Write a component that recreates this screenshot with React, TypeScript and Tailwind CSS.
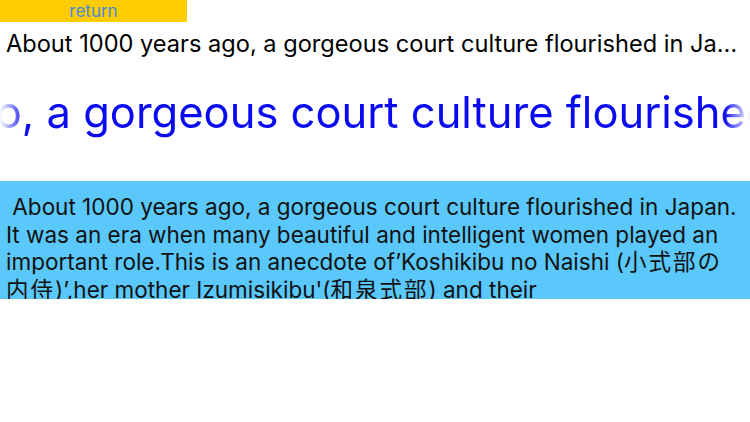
import React from "react";

const FULL =
  "About 1000 years ago, a gorgeous court culture flourished in Japan. It was an era when many beautiful and intelligent women played an important role.";

const Cjk = ({ children }: { children: React.ReactNode }) => (
  <span className="tracking-[2px]">{children}</span>
);

export default function App() {
  return (
    <div className="w-[750px] h-[422px] bg-white overflow-hidden flex flex-col" style={{ fontFamily: "Inter, 'Noto Sans', 'Noto Sans CJK JP', sans-serif" }}>
      <div className="w-[187px] h-[22px] bg-[#ffcc00] flex items-center justify-center text-[17px] text-[#4a8ad8] leading-none">
        return
      </div>
      <div className="h-[44px] pl-[6px] pr-[8px] flex items-center">
        <div className="truncate text-[23.6px] text-black">
          About 1000 years ago, a gorgeous court culture flourished in Japan. It was an era when many beautiful and intelligent women played an important role.
        </div>
      </div>
      <div className="h-[115px] relative overflow-hidden flex items-center pb-[22px] [mask-image:linear-gradient(to_right,transparent_0px,black_26px,black_724px,transparent_750px)]">
        <div className="whitespace-nowrap text-[43.5px] text-[#0a0af0] ml-[-428px] leading-none">
          {FULL}
        </div>
      </div>
      <div className="h-[118px] bg-[#5ac8fa] overflow-hidden px-[6px] pt-[12px]">
        <p className="whitespace-pre-wrap text-[22.5px] leading-[27.5px] text-[#111]">
          {" About 1000 years ago, a gorgeous court culture flourished in Japan. It was an era when many beautiful and intelligent women played an important role.This is an anecdote of’Koshikibu no Naishi ("}
          <Cjk>小式部の内侍</Cjk>
          {")’,her mother Izumisikibu'("}
          <Cjk>和泉式部</Cjk>
          {") and their"}
        </p>
      </div>
    </div>
  );
}
